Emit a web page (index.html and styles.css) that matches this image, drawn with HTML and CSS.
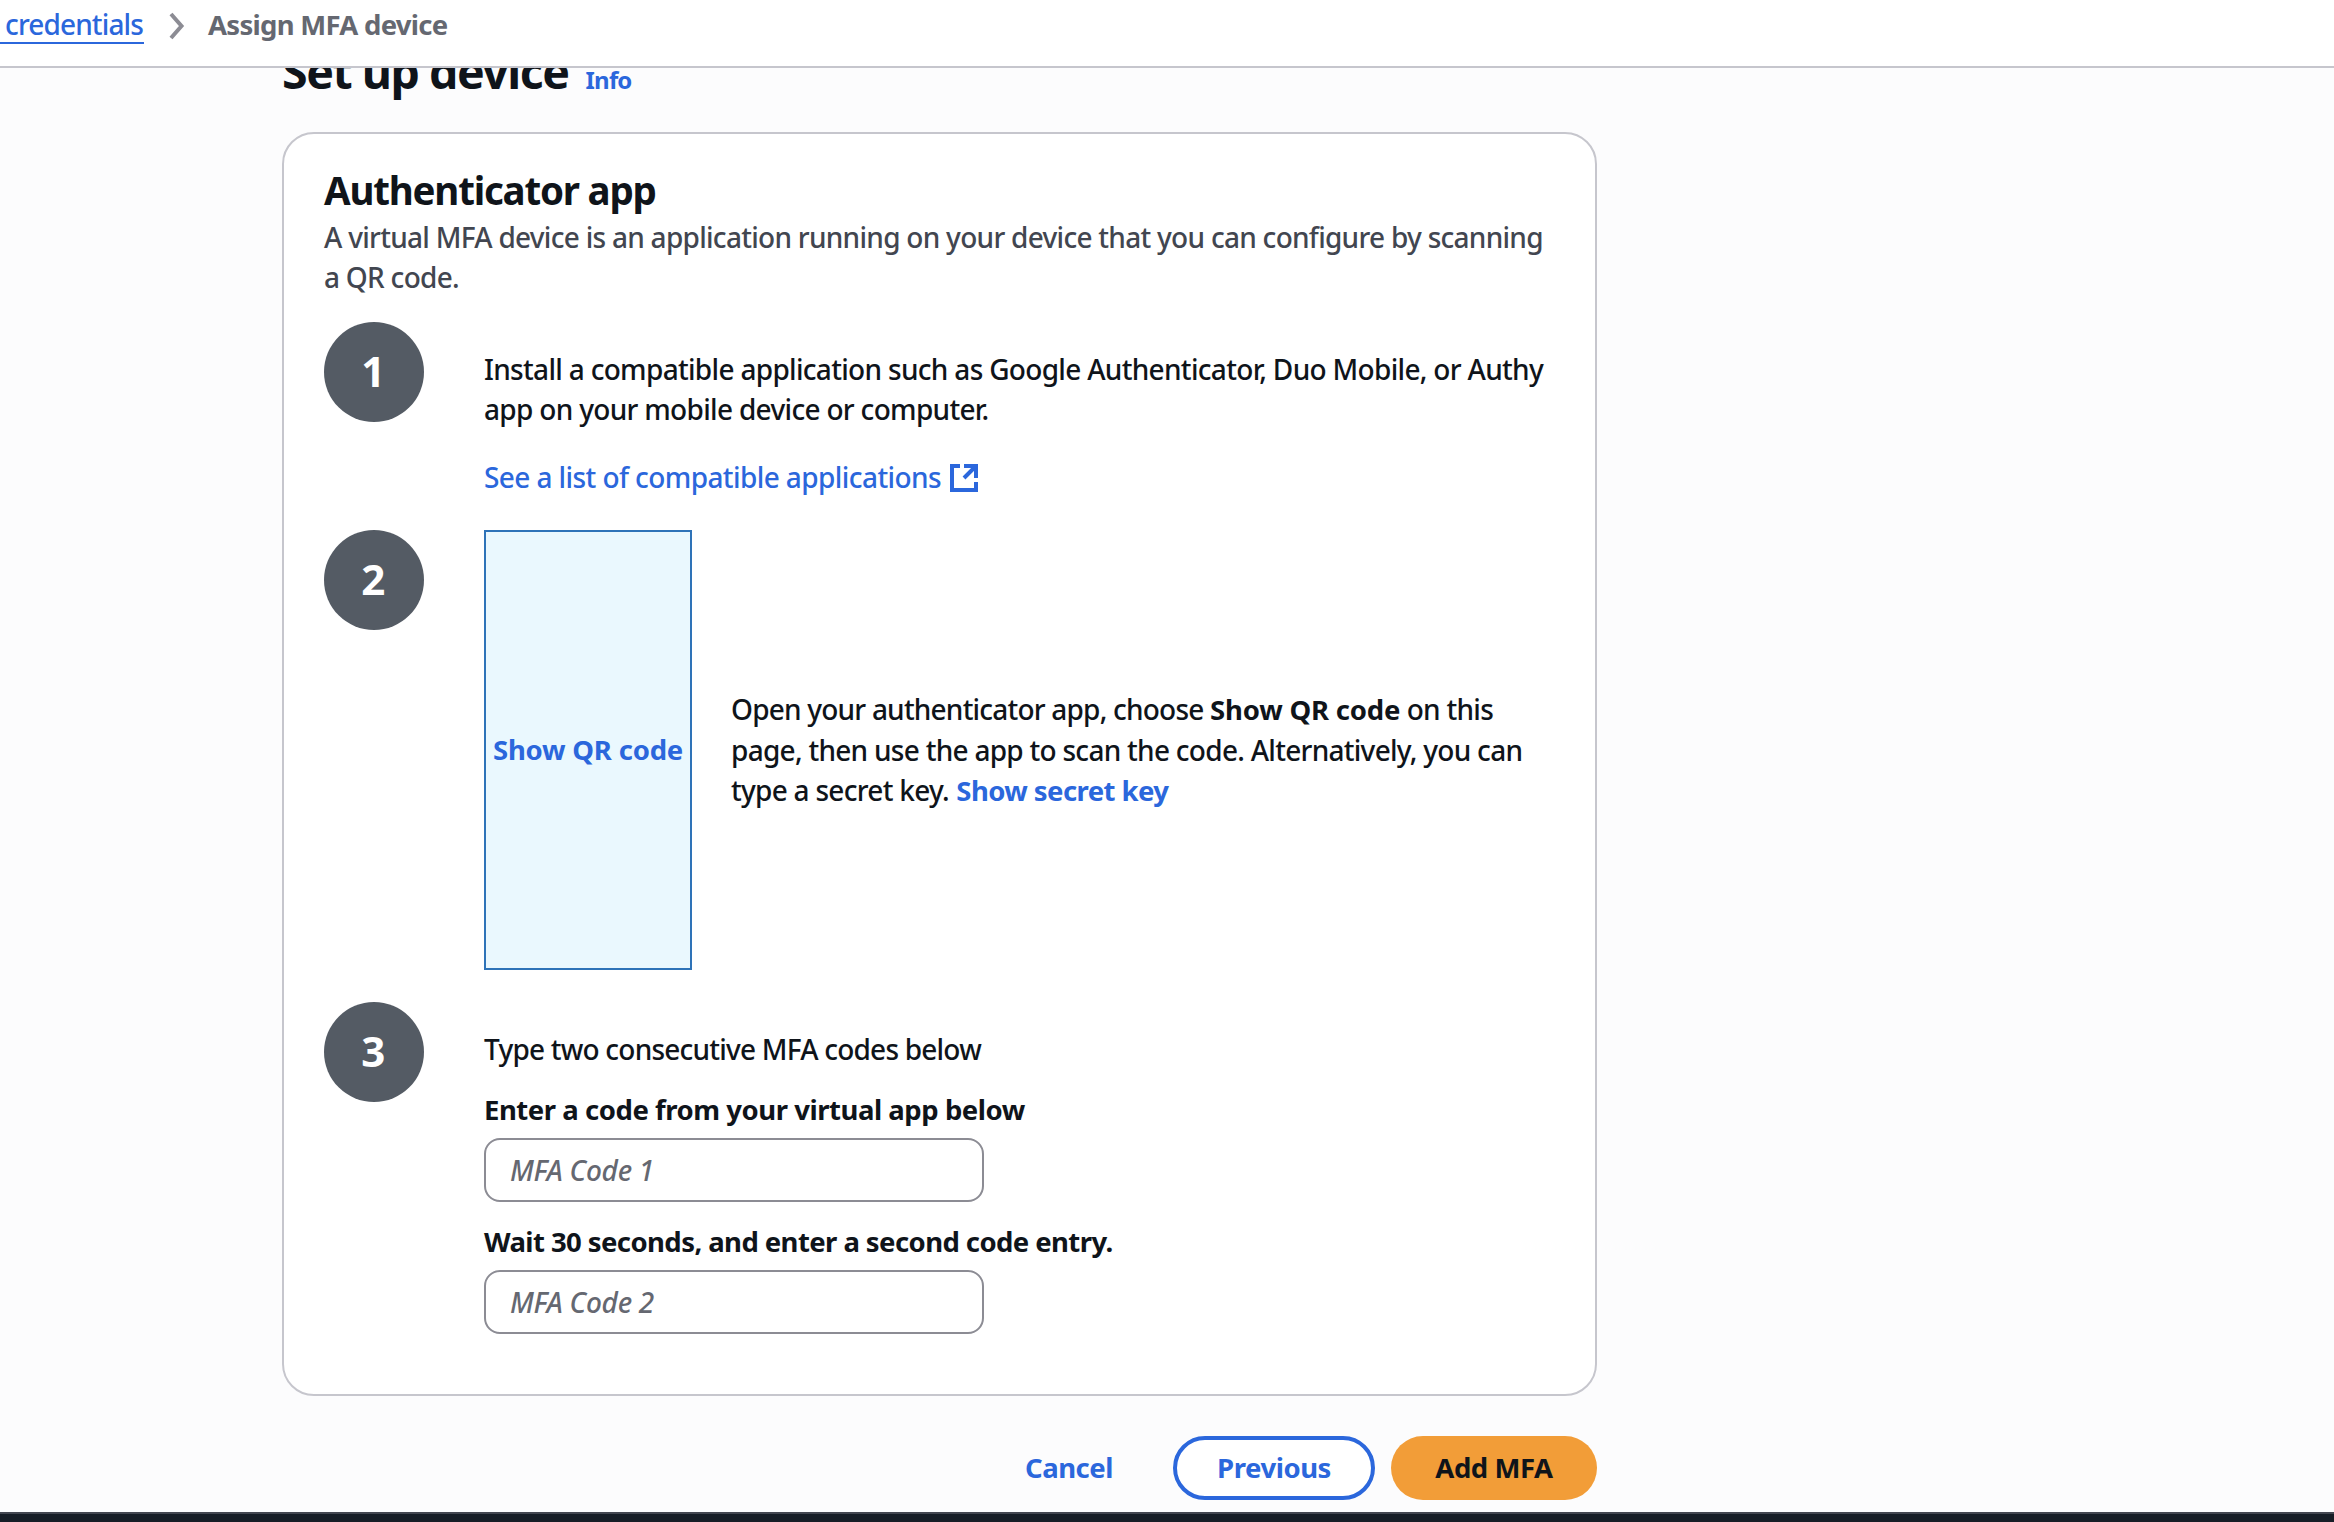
FILE: index.html
```
<!DOCTYPE html>
<html lang="en">
<head>
<meta charset="utf-8">
<title>Assign MFA device</title>
<link rel="stylesheet" href="styles.css">
</head>
<body>
<div class="page">
  <header class="topbar">
    <a class="crumb-link">credentials</a>
    <svg class="chevron" width="16" height="28" viewBox="0 0 16 28"><path d="M2 2 L12.5 14 L2 26" fill="none" stroke="#8c8c94" stroke-width="4"/></svg>
    <span class="crumb-current">Assign MFA device</span>
  </header>
  <main class="content">
    <div class="title-row">
      <h1 class="title">Set up device</h1>
      <a class="info">Info</a>
    </div>
    <section class="card">
      <h2 class="card-title">Authenticator app</h2>
      <p class="desc">A virtual MFA device is an application running on your device that you can configure by scanning<br>a QR code.</p>
      <div class="step step-one">
        <div class="num">1</div>
        <div class="body">
          <p class="text install">Install a compatible application such as Google Authenticator, Duo Mobile, or Authy<br>app on your mobile device or computer.</p>
          <a class="link">See a list of compatible applications
            <svg class="external" width="28" height="28" viewBox="0 0 28 28" fill="none" stroke="#2b67dc" stroke-width="4"><path d="M10 2H2v24h24V18M14 2h12v12M26 2L14 14"/></svg>
          </a>
        </div>
      </div>
      <div class="step step-two">
        <div class="num">2</div>
        <button class="qr">Show QR code</button>
        <p class="text"><span class="open">Open your authenticator app, choose</span> <b class="qr-name">Show QR code</b> on this<br>page, then use the app to scan the code. Alternatively, you can<br>type a secret key. <b class="secret">Show secret key</b></p>
      </div>
      <div class="step">
        <div class="num">3</div>
        <div class="body">
          <p class="text consecutive">Type two consecutive MFA codes below</p>
          <label class="label">Enter a code from your virtual app below</label>
          <div class="input">MFA Code 1</div>
          <label class="label wait">Wait 30 seconds, and enter a second code entry.</label>
          <div class="input">MFA Code 2</div>
        </div>
      </div>
    </section>
    <div class="actions">
      <button class="btn cancel">Cancel</button>
      <button class="btn previous">Previous</button>
      <button class="btn primary">Add MFA</button>
    </div>
  </main>
  <footer class="footer"></footer>
</div>
</body>
</html>
```
FILE: styles.css
```
* { box-sizing: border-box; }
body { margin: 0; font: 500 28px/40px "Noto Sans", "Open Sans", sans-serif; letter-spacing: -0.72px; color: #0f141a; background: #fcfcfd; }
h1, h2, p { margin: 0; }
h1, h2 { font-weight: 700; }
b { font-weight: 700; font-size: 27.5px; }
button { font: inherit; }
.page { height: 1522px; display: flex; flex-direction: column; overflow: hidden; }
.topbar { height: 68px; flex: none; display: flex; align-items: flex-start; padding-top: 4px; background: #fff; border-bottom: 2px solid #c6c6cd; white-space: nowrap; }
.crumb-link { height: 40px; width: 144px; padding-left: 5px; letter-spacing: -0.87px; color: #2b67dc; border-bottom: 2px solid #2b67dc; }
.chevron { margin: 8px 23px 0 25px; flex: none; }
.crumb-current { padding-top: 1px; font-weight: 700; font-size: 27.5px; letter-spacing: -0.72px; color: #656871; }
.content { flex: 1; min-height: 0; margin-left: 282px; width: 1315px; overflow: hidden; }
.title-row { height: 60px; margin-top: -27px; display: flex; align-items: baseline; gap: 17px; white-space: nowrap; }
.title { font-size: 46.5px; line-height: 60px; letter-spacing: -1.48px; }
.info { font-size: 24px; font-weight: 700; letter-spacing: -0.8px; color: #2b67dc; }
.card { margin-top: 31px; height: 1264px; padding: 31px 40px; background: #fff; border: 2px solid #c6c6cd; border-radius: 32px; white-space: nowrap; }
.card-title { font-size: 38.5px; line-height: 50px; letter-spacing: -1.21px; }
.desc { margin-top: 2px; color: #424650; }
.step { display: flex; }
.step-one { height: 208px; margin-top: 25px; }
.step-two { height: 440px; margin-bottom: 32px; align-items: center; }
.step-two .num { align-self: flex-start; }
.num { flex: none; width: 100px; height: 100px; margin-right: 60px; padding-right: 2px; border-radius: 50%; background: #545b64; color: #fff; font-size: 42px; font-weight: 700; line-height: 97px; text-align: center; }
.body { padding-top: 27px; }
.install { letter-spacing: -0.687px; }
.link { display: flex; align-items: center; gap: 9px; margin-top: 28px; letter-spacing: -0.587px; color: #2b67dc; }
.external { margin-top: 2px; }
.open { letter-spacing: -0.79px; }
.qr-name { letter-spacing: -0.2px; }
.secret { margin-left: 1px; letter-spacing: -0.58px; color: #2b67dc; }
.consecutive { letter-spacing: -0.78px; }
.qr { flex: none; width: 208px; height: 440px; margin-right: 39px; padding: 0; background: #eaf8fe; border: 2px solid #2e73b8; color: #2b67dc; font-weight: 700; font-size: 27.5px; letter-spacing: -0.2px; }
.label { display: block; margin-top: 20px; padding-top: 1px; font-weight: 700; font-size: 27.5px; letter-spacing: -0.46px; }
.wait { margin-top: 19px; letter-spacing: -0.58px; }
.input { width: 500px; height: 64px; margin-top: 8px; padding: 10px 24px; border: 2px solid #8c8c94; border-radius: 16px; font-style: italic; letter-spacing: -0.28px; color: #656871; }
.actions { display: flex; justify-content: flex-end; margin-top: 40px; }
.btn { height: 64px; padding: 0; border: 0; border-radius: 32px; font-weight: 700; font-size: 27.5px; letter-spacing: -0.45px; white-space: nowrap; background: none; color: #2b67dc; }
.cancel { width: 178px; margin-right: 15px; }
.previous { width: 202px; margin-right: 16px; background: #fff; border: 4px solid #2b67dc; }
.primary { width: 206px; background: #f29d38; color: #0f141a; }
.footer { flex: none; height: 10px; background: #161d26; border-top: 2px solid #424650; }
```
